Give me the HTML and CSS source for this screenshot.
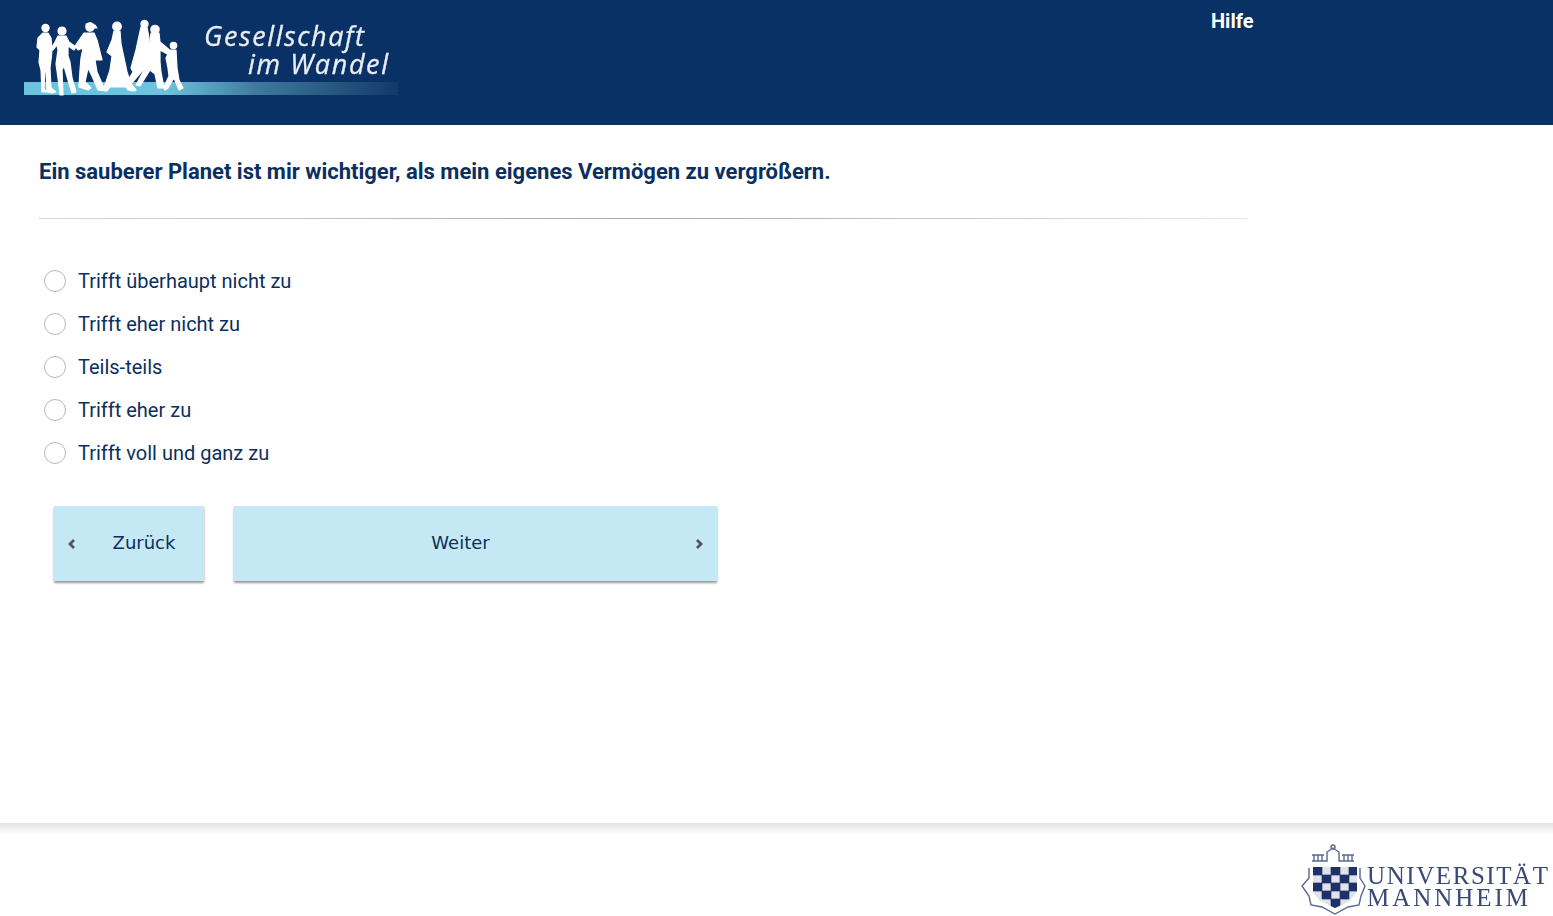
FILE: index.html
```html
<!DOCTYPE html>
<html lang="de">
<head>
    <meta charset="UTF-8">
    <meta name="viewport" content="width=device-width, initial-scale=1.0">
    <title>Gesellschaft im Wandel</title>
    <link rel="stylesheet" href="styles.css">
</head>
<body>
    <header class="header">
        <svg class="logo" viewBox="24 8 376 100" width="376" height="100" role="img" aria-label="Gesellschaft im Wandel">
            <defs>
                <linearGradient id="band">
                    <stop offset="0" stop-color="#6cc3de"/>
                    <stop offset="0.38" stop-color="#6cc3de"/>
                    <stop offset="0.62" stop-color="#3f7a9c"/>
                    <stop offset="1" stop-color="#123a6b"/>
                </linearGradient>
            </defs>
            <rect x="24" y="82" width="374" height="13" fill="url(#band)"/>
            <g class="people">
                <circle cx="45.5" cy="28" r="3.6"/>
                <path d="M43 33 L48 33 L51 38 L52 50 L51 60 L50 68 L51 88 L56 92 L52 93 L47 92 L46 70 L45 68 L44 88 L46 92 L42 92 L41 70 L39 62 L40 50 L37 47 L38 38Z"/>
                <circle cx="62" cy="31" r="4"/>
                <path d="M58 36 L66 36 L69 42 L76 47 L74 50 L68 46 L68 56 L70 62 L72 78 L76 92 L72 93 L68 80 L64 66 L62 70 L63 95 L60 95 L58 78 L56 64 L58 50 L57 45 L53 50 L52 47 L55 42Z"/>
                <circle cx="90" cy="27" r="4.2"/>
                <path d="M86 24 L95 25 L97 28 L88 28Z"/>
                <path d="M84 33 L94 33 L97 40 L102 60 L95 60 L97 72 L104 88 L106 91 L98 90 L92 76 L88 68 L85 82 L91 88 L88 90 L79 87 L80 70 L81 58 L83 48 L78 50 L75 46Z"/>
                <circle cx="117" cy="26.5" r="4.3"/>
                <path d="M114 31 L120 31 L121 44 L124 58 L127 72 L131 84 L136 90 L132 91 L126 87 L110 87 L107 91 L103 90 L106 82 L110 70 L112 56 L107 52 L112 40Z"/>
                <circle cx="144.5" cy="24" r="3.6"/>
                <path d="M141 27 L147 27 L149 38 L150 60 L148 68 L143 70 L130 85 L135 91 L128 90 L125 85 L133 72 L131 68 L136 50Z"/>
                <circle cx="155" cy="29.5" r="4.2"/>
                <path d="M151 33 L159 33 L160 42 L172 52 L171 56 L160 50 L160 62 L161 72 L164 88 L158 88 L155 74 L150 70 L140 86 L136 85 L143 72 L148 60 L150 42Z"/>
                <circle cx="173.5" cy="45.5" r="3.2"/>
                <path d="M170 50 L176 50 L177 68 L179 80 L183 88 L179 90 L174 78 L168 88 L165 90 L164 87 L169 76 L168 68 L166 58Z"/>
            </g>
            <g class="logo-text">
                <text x="204" y="46" textLength="160">Gesellschaft</text>
                <text x="248" y="74" textLength="140">im Wandel</text>
            </g>
        </svg>
        <a class="help-link" href="#">Hilfe</a>
    </header>

    <main class="content">
        <h1 class="question">Ein sauberer Planet ist mir wichtiger, als mein eigenes Vermögen zu vergrößern.</h1>
        <div class="divider"></div>

        <form class="answers">
            <label class="answer"><input type="radio" name="q1"><span>Trifft überhaupt nicht zu</span></label>
            <label class="answer"><input type="radio" name="q1"><span>Trifft eher nicht zu</span></label>
            <label class="answer"><input type="radio" name="q1"><span>Teils-teils</span></label>
            <label class="answer"><input type="radio" name="q1"><span>Trifft eher zu</span></label>
            <label class="answer"><input type="radio" name="q1"><span>Trifft voll und ganz zu</span></label>
        </form>

        <div class="nav-buttons">
            <button class="nav-button nav-back" type="button">
                <svg class="chevron" viewBox="0 0 8 10" width="8" height="10"><path d="M6 1 L2 5 L6 9"/></svg>
                <span>Zurück</span>
            </button>
            <button class="nav-button nav-next" type="button">
                <span>Weiter</span>
                <svg class="chevron" viewBox="0 0 8 10" width="8" height="10"><path d="M2 1 L6 5 L2 9"/></svg>
            </button>
        </div>
    </main>

    <footer class="footer">
        <svg class="uni-logo" viewBox="1298 842 255 74" width="255" height="74" role="img" aria-label="Universität Mannheim">
            <defs>
                <clipPath id="shield">
                    <path d="M1313 867 L1357 867 L1357 892 L1350 901 L1335 908 L1320 901 L1313 892Z"/>
                </clipPath>
            </defs>
            <g class="uni-lines">
                <path d="M1314 861 L1314 855 M1318 861 L1318 855 M1322 861 L1322 855 M1312 855 L1324 855 M1312 861 L1327 861 L1327 852 L1333 848 L1339 852 L1339 861 L1354 861 M1344 861 L1344 855 M1348 861 L1348 855 M1352 861 L1352 855 M1342 855 L1354 855"/>
                <circle cx="1333" cy="847" r="2"/>
                <path d="M1309 868 L1309 878 L1302 886 L1309 896 L1311 905 L1322 907 L1335 914 L1348 907 L1359 905 L1361 896 L1365 886 L1360 878 L1360 868"/>
            </g>
            <g clip-path="url(#shield)">
                <rect x="1313" y="867" width="44" height="42" fill="#dfe3ec"/>
                <path class="uni-check" d="M1313 867h9v8h-9z M1331 867h9v8h-9z M1349 867h8v8h-8z M1322 875h9v8h-9z M1340 875h9v8h-9z M1313 883h9v8h-9z M1331 883h9v8h-9z M1349 883h8v8h-8z M1322 891h9v8h-9z M1340 891h9v8h-9z M1331 899h9v9h-9z"/>
            </g>
            <g class="uni-text">
                <text x="1367" y="884" textLength="181">UNIVERSITÄT</text>
                <text x="1367" y="906" textLength="161">MANNHEIM</text>
            </g>
        </svg>
    </footer>
</body>
</html>
```

FILE: styles.css
```css
html, body {
    height: 100%;
}

body {
    margin: 0;
    display: flex;
    flex-direction: column;
    height: 100vh;
    overflow: hidden;
    font-family: Roboto, sans-serif;
    color: #0b2f5e;
    background-color: #fff;
}

.header {
    display: flex;
    align-items: flex-start;
    flex: none;
    height: 125px;
    padding: 8px 0 0 24px;
    box-sizing: border-box;
    background-color: #0a3165;
}

.logo {
    display: block;
    flex: none;
    filter: blur(0.5px);
}

.people {
    fill: #fff;
    stroke: #fff;
    stroke-width: 1.2;
    stroke-linejoin: round;
}

.logo-text {
    font-family: "Open Sans", sans-serif;
    font-style: italic;
    font-size: 27px;
    fill: #e9eef4;
    stroke: #e9eef4;
    stroke-width: 0.3;
}

.help-link {
    margin: 1px 0 0 811px;
    font-size: 20px;
    line-height: 24px;
    font-weight: 700;
    color: #fff;
    text-decoration: none;
}

.content {
    flex: 1;
    padding: 0 0 0 39px;
}

.question {
    margin: 0;
    padding-top: 33px;
    font-size: 22px;
    line-height: 27px;
    font-weight: 700;
}

.divider {
    width: 1208px;
    height: 1px;
    margin-top: 33px;
    background: linear-gradient(to right, #d8d8d8, #a8a8a8 50%, #e8e8e8);
}

.answers {
    margin: 40px 0 0 5px;
}

.answer {
    display: flex;
    align-items: center;
    height: 43px;
    font-size: 20px;
    cursor: pointer;
}

.answer input {
    appearance: none;
    width: 22px;
    height: 22px;
    margin: 0 12px 0 0;
    border: 1.5px solid #b8b8b8;
    border-radius: 50%;
    background: #fff;
}

.nav-buttons {
    display: flex;
    gap: 30px;
    margin: 32px 0 0 15px;
}

.nav-button {
    display: flex;
    align-items: center;
    height: 75px;
    padding: 0 14px;
    border: none;
    background-color: #c5e8f5;
    box-shadow: 0 2px 2px rgba(0, 0, 0, 0.4);
    font-family: "DejaVu Sans", sans-serif;
    font-size: 18px;
    color: #0b2f5e;
    cursor: pointer;
}

.nav-button span {
    flex: 1;
    padding-bottom: 3px;
    text-align: center;
}

.nav-back {
    width: 150px;
    padding-right: 0;
}

.nav-back span {
    margin-left: 8px;
}

.nav-next {
    width: 483px;
    padding-left: 0;
}

.nav-next span {
    margin-right: 8px;
}

.chevron {
    flex: none;
    fill: none;
    stroke: #555;
    stroke-width: 2.8;
}

.footer {
    display: flex;
    justify-content: flex-end;
    align-items: flex-end;
    flex: none;
    height: 93px;
    background: linear-gradient(#e2e2e2, #efefef 5px, #fff 11px);
}

.uni-logo {
    display: block;
    filter: blur(0.3px);
}

.uni-lines {
    fill: none;
    stroke: #5a6890;
    stroke-width: 1.4;
}

.uni-check {
    fill: #1f3169;
    stroke: #1f3169;
    stroke-width: 0.7;
}

.uni-text {
    font-family: "Liberation Serif", serif;
    font-size: 25px;
    fill: #3a4874;
}
```
